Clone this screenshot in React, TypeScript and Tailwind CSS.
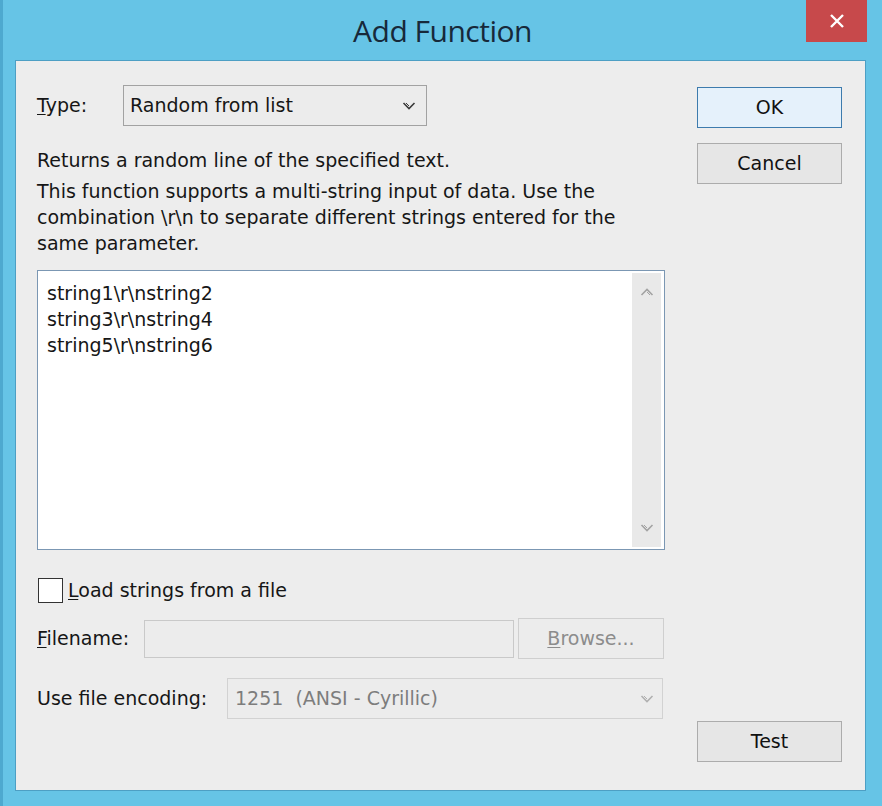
import React from "react";

const font = { fontFamily: '"DejaVu Sans", sans-serif' };

function Chevron({ className }: { className?: string }) {
  return (
    <svg width="14" height="10" viewBox="0 0 14 10" className={className}>
      <path d="M1.5 2 L7 7.5 L12.5 2" fill="none" stroke="currentColor" strokeWidth="1.6" />
      <path d="M4 2 L7 5" fill="none" stroke="currentColor" strokeWidth="1" />
    </svg>
  );
}

function Button({ children, primary, disabled, className }: { children: React.ReactNode; primary?: boolean; disabled?: boolean; className?: string }) {
  return (
    <div
      className={
        "flex h-[41px] items-center justify-center border text-[19px] " +
        (primary
          ? "border-[#3d7bad] bg-[#e5f1fb] text-[#111] "
          : disabled
          ? "border-[#cfcfcf] bg-[#ececec] text-[#8c8c8c] "
          : "border-[#acacac] bg-[#e6e6e6] text-[#111] ") +
        (className ?? "")
      }
    >
      {children}
    </div>
  );
}

export default function App() {
  return (
    <div className="flex h-[806px] w-[882px] flex-col border-l-[3px] border-[#4ea9cf] bg-[#66c4e6]" style={font}>
      <div className="relative flex h-[60px] shrink-0 items-center justify-center">
        <span className="text-[30px] text-[#17293a]" style={{ fontFamily: '"Open Sans", sans-serif', letterSpacing: "-0.5px" }}>
          Add Function
        </span>
        <div className="absolute right-[15px] top-0 flex h-[42px] w-[61px] items-center justify-center bg-[#c7494b] text-[22px] text-white">
          <svg width="16" height="16" viewBox="0 0 16 16">
            <path d="M2 2 L14 14 M14 2 L2 14" stroke="white" strokeWidth="2.4" />
          </svg>
        </div>
      </div>
      <div className="mb-[15px] ml-[12px] mr-[16px] flex flex-1 border border-[#4d9fc4] bg-[#ededed] pl-[21px] pt-[24px] text-[#161616]">
        <div className="flex w-[628px] flex-col">
          <div className="flex h-[41px] items-center">
            <span className="w-[86px] text-[19px]">
              <span className="underline underline-offset-2">T</span>ype:
            </span>
            <div className="flex h-[41px] w-[304px] items-center justify-between border border-[#a2a2a2] bg-[#ececec] pl-[6px] pr-[10px] text-[19px]">
              <span>Random from list</span>
              <Chevron className="text-[#3a3a3a]" />
            </div>
          </div>
          <div className="mt-[21px] text-[19px] leading-[26px]">Returns a random line of the specified text.</div>
          <div className="mt-[5px] text-[19px] leading-[26px]">
            This function supports a multi-string input of data. Use the combination \r\n to separate different strings entered for the same parameter.
          </div>
          <div className="mt-[14px] flex h-[280px] border border-[#7b97b3] bg-white">
            <div className="flex-1 pl-[9px] pt-[9px] text-[19px] leading-[26px]">
              <div>string1\r\nstring2</div>
              <div>string3\r\nstring4</div>
              <div>string5\r\nstring6</div>
            </div>
            <div className="my-[2px] mr-[3px] flex w-[29px] flex-col items-center justify-between bg-[#e9e9e9] py-[14px] text-[#a3a3a3]">
              <Chevron className="rotate-180" />
              <Chevron />
            </div>
          </div>
          <div className="mt-[27px] flex h-[26px] items-center">
            <div className="ml-[1px] h-[25px] w-[25px] border border-[#333] bg-white" />
            <span className="ml-[5px] text-[19px]">
              <span className="underline underline-offset-2">L</span>oad strings from a file
            </span>
          </div>
          <div className="mt-[15px] flex h-[41px] items-center">
            <span className="w-[107px] text-[19px]">
              <span className="underline underline-offset-2">F</span>ilename:
            </span>
            <div className="h-[38px] w-[370px] border border-[#c9c9c9] bg-[#ececec]" />
            <Button disabled className="ml-[4px] w-[146px]">
              <span>
                <span className="underline underline-offset-2">B</span>rowse...
              </span>
            </Button>
          </div>
          <div className="mt-[19px] flex h-[41px] items-center">
            <span className="w-[190px] text-[19px]">Use file encoding:</span>
            <div className="flex h-[41px] w-[436px] items-center justify-between border border-[#d2d2d2] bg-[#ececec] pl-[7px] pr-[8px] text-[19px] text-[#7d7d7d]">
              <span className="whitespace-pre">1251  (ANSI - Cyrillic)</span>
              <Chevron className="text-[#b0b0b0]" />
            </div>
          </div>
        </div>
        <div className="ml-[32px] flex w-[145px] flex-col pb-[28px] pt-[2px]">
          <Button primary>OK</Button>
          <Button className="mt-[15px]">Cancel</Button>
          <div className="flex-1" />
          <Button>Test</Button>
        </div>
      </div>
    </div>
  );
}
